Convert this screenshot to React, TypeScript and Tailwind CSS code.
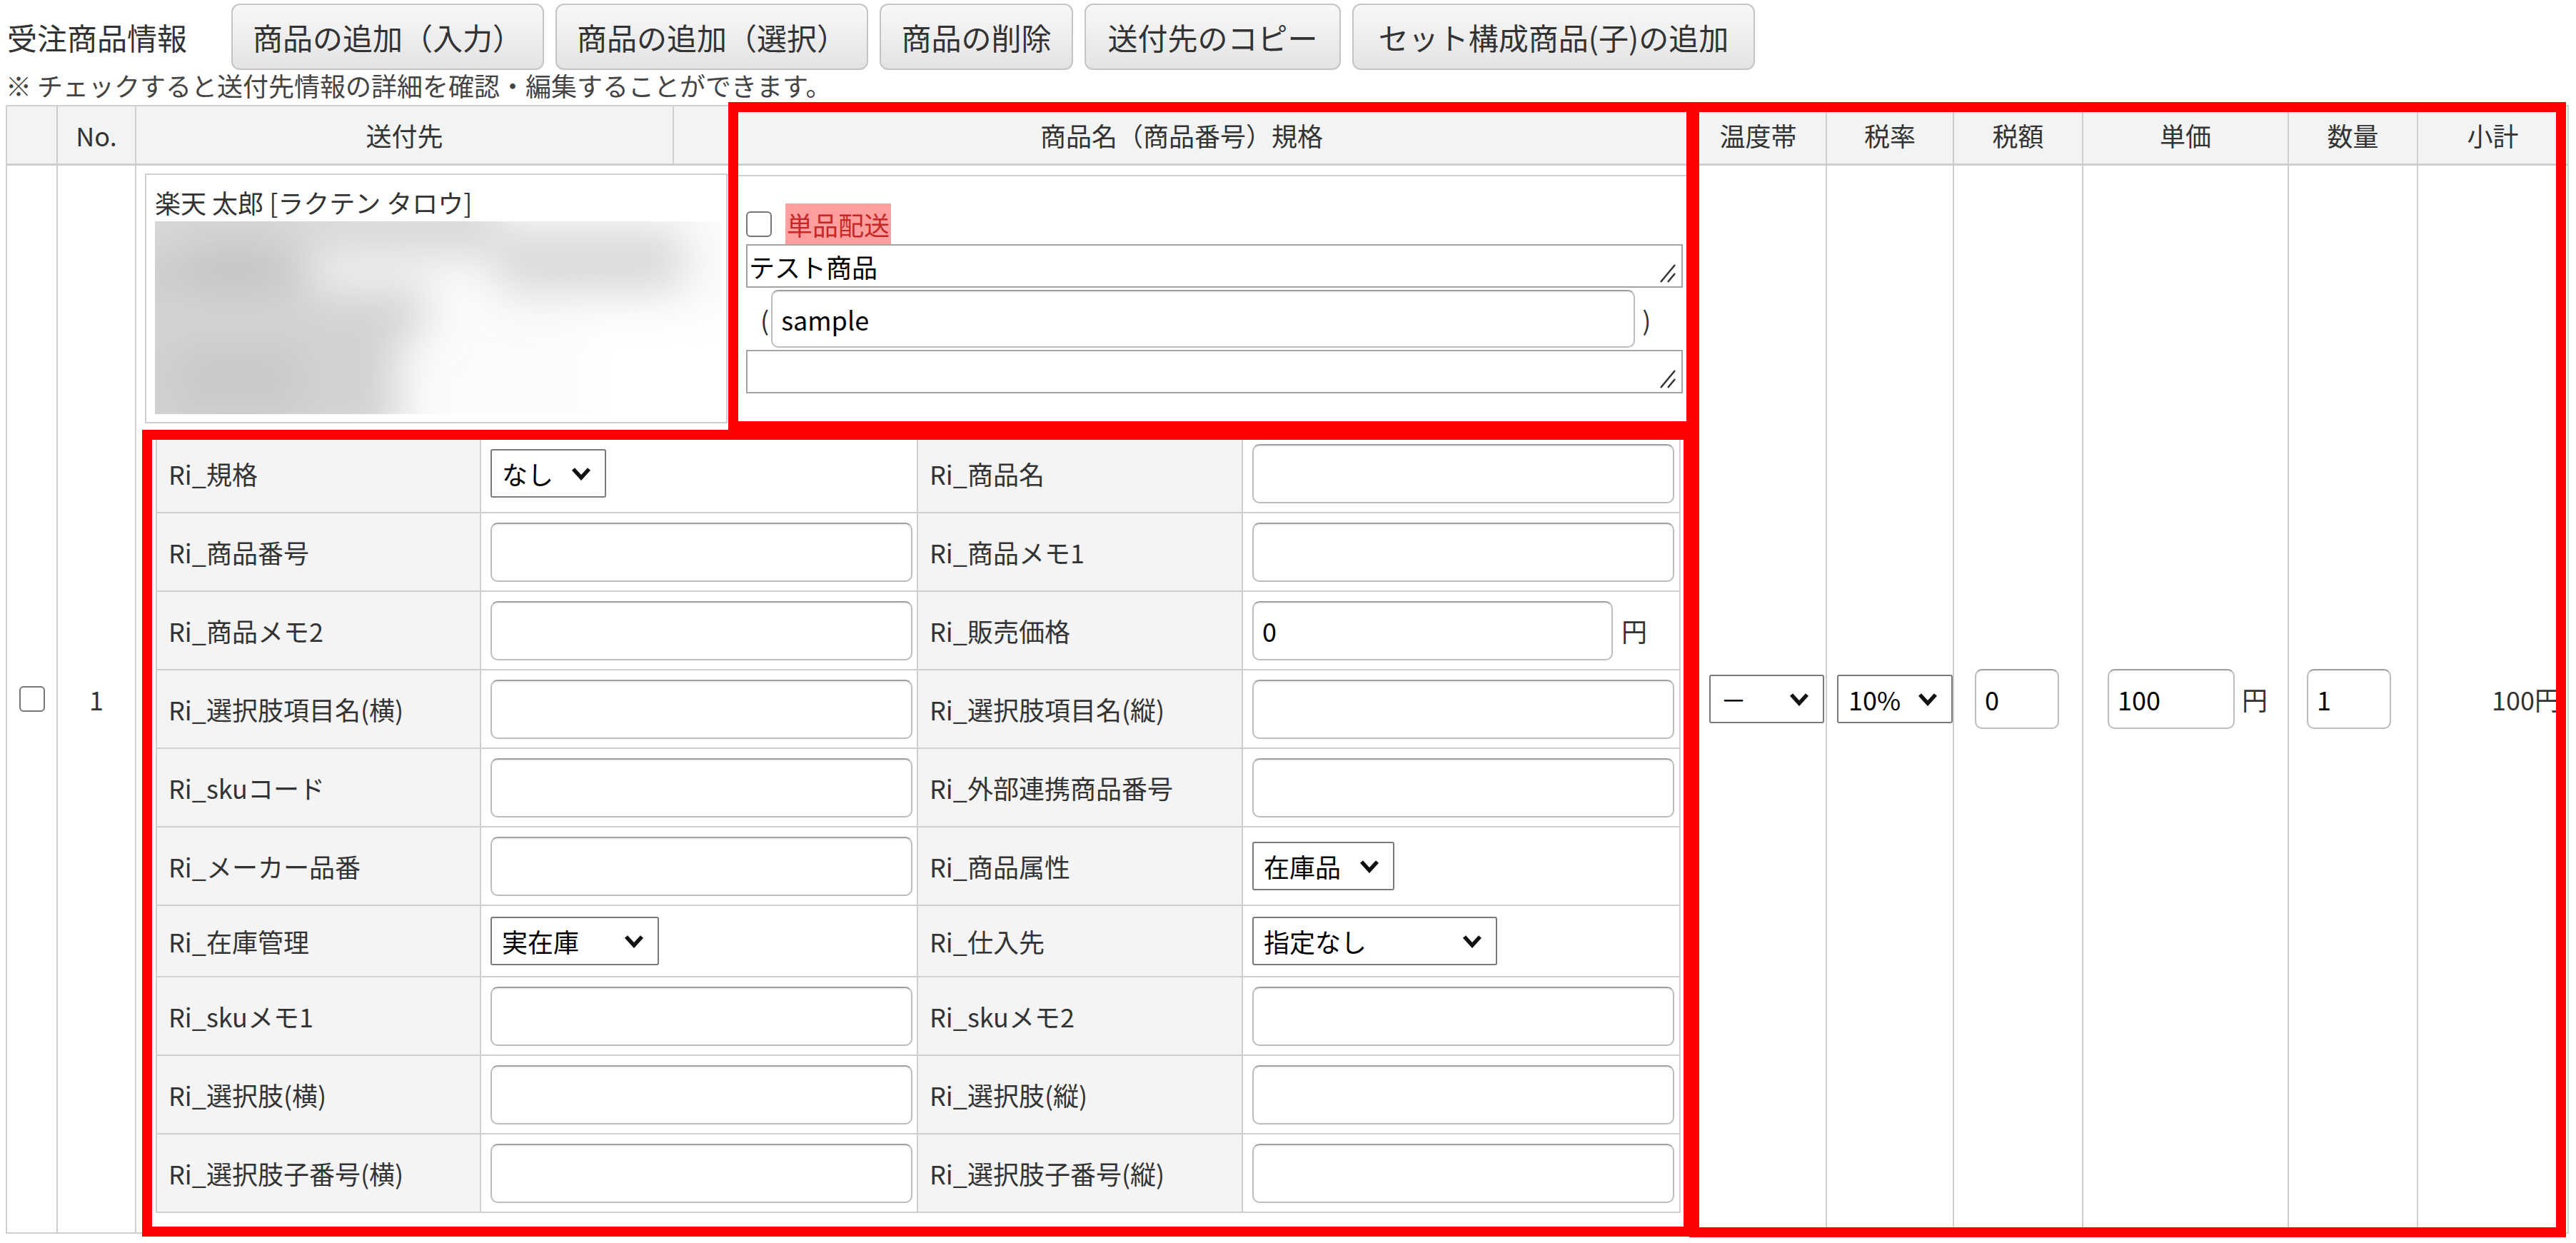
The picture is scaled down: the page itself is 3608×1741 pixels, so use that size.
import React from "react";

const line = "border-[#cfcfcf]";

const Chevron = () => (
  <svg width="30" height="20" viewBox="0 0 30 20" className="shrink-0">
    <path d="M4 4 L15 16 L26 4" fill="none" stroke="#111" strokeWidth="5.5" strokeLinecap="butt" strokeLinejoin="miter" />
  </svg>
);

const SelectBox = ({ value, className }: { value: string; className: string }) => (
  <div
    className={`h-[68px] flex items-center justify-between pl-[14px] pr-[18px] bg-white border-2 border-[#7a7a7a] rounded-[3px] text-black ${className}`}
  >
    <span className="leading-none">{value}</span>
    <Chevron />
  </div>
);

const TextBox = ({ value = "", className = "w-[591px] h-[83px]" }: { value?: string; className?: string }) => (
  <input
    readOnly
    value={value}
    className={`${className} px-[12px] bg-white border-2 border-[#bdbdbd] border-t-[#9e9e9e] rounded-[10px] text-black outline-none shadow-[inset_0_2px_2px_rgba(0,0,0,0.06)]`}
  />
);

const CheckBox = () => (
  <div className="w-[36px] h-[36px] shrink-0 bg-white border-2 border-[#767676] rounded-[6px]" />
);

const ResizeHandle = () => (
  <svg width="26" height="30" viewBox="0 0 26 30" className="absolute right-[6px] bottom-[4px]">
    <path d="M3 28 L23 4 M13 28 L23 16" stroke="#333" strokeWidth="2.5" fill="none" />
  </svg>
);

const TextArea = ({ value = "" }: { value?: string }) => (
  <div className="relative h-[61px] w-[1312px] flex items-center pl-[2px] bg-white border-2 border-[#a3a3a3] text-black">
    <span className="leading-none">{value}</span>
    <ResizeHandle />
  </div>
);

// the address lines are blurred out in the screenshot
const BlurredAddress = () => (
  <svg width="793" height="270" className="block">
    <defs>
      <filter id="addr-blur" x="-30%" y="-30%" width="160%" height="160%">
        <feGaussianBlur stdDeviation="30" />
      </filter>
    </defs>
    <rect width="793" height="270" fill="#fbfbfb" />
    <g filter="url(#addr-blur)">
      <rect x="-80" y="-60" width="300" height="420" fill="#c9c9c9" />
      <rect x="-80" y="-40" width="560" height="90" fill="#d8d8d8" />
      <rect x="480" y="10" width="260" height="90" fill="#d9d9d9" />
      <rect x="-80" y="90" width="460" height="70" fill="#d4d4d4" />
      <rect x="-80" y="150" width="420" height="160" fill="#d2d2d2" />
      <rect x="40" y="30" width="140" height="70" fill="#c4c4c4" />
      <rect x="30" y="180" width="170" height="80" fill="#c8c8c8" />
      <rect x="600" y="130" width="260" height="200" fill="#ffffff" />
    </g>
  </svg>
);

type Field = { label: string; ctrl: React.ReactNode };
type Row = { h: string; left: Field; right: Field };

const rows: Row[] = [
  {
    h: "h-[110px]",
    left: { label: "Ri_規格", ctrl: <SelectBox value="なし" className="w-[162px]" /> },
    right: { label: "Ri_商品名", ctrl: <TextBox /> },
  },
  {
    h: "h-[110px]",
    left: { label: "Ri_商品番号", ctrl: <TextBox /> },
    right: { label: "Ri_商品メモ1", ctrl: <TextBox /> },
  },
  {
    h: "h-[110px]",
    left: { label: "Ri_商品メモ2", ctrl: <TextBox /> },
    right: {
      label: "Ri_販売価格",
      ctrl: (
        <div className="flex items-center">
          <TextBox value="0" className="w-[505px] h-[83px]" />
          <span className="ml-[12px] text-[#333]">円</span>
        </div>
      ),
    },
  },
  {
    h: "h-[110px]",
    left: { label: "Ri_選択肢項目名(横)", ctrl: <TextBox /> },
    right: { label: "Ri_選択肢項目名(縦)", ctrl: <TextBox /> },
  },
  {
    h: "h-[110px]",
    left: { label: "Ri_skuコード", ctrl: <TextBox /> },
    right: { label: "Ri_外部連携商品番号", ctrl: <TextBox /> },
  },
  {
    h: "h-[110px]",
    left: { label: "Ri_メーカー品番", ctrl: <TextBox /> },
    right: { label: "Ri_商品属性", ctrl: <SelectBox value="在庫品" className="w-[199px]" /> },
  },
  {
    h: "h-[100px]",
    left: { label: "Ri_在庫管理", ctrl: <SelectBox value="実在庫" className="w-[236px]" /> },
    right: { label: "Ri_仕入先", ctrl: <SelectBox value="指定なし" className="w-[343px]" /> },
  },
  {
    h: "h-[110px]",
    left: { label: "Ri_skuメモ1", ctrl: <TextBox /> },
    right: { label: "Ri_skuメモ2", ctrl: <TextBox /> },
  },
  {
    h: "h-[110px]",
    left: { label: "Ri_選択肢(横)", ctrl: <TextBox /> },
    right: { label: "Ri_選択肢(縦)", ctrl: <TextBox /> },
  },
  {
    h: "h-[110px]",
    left: { label: "Ri_選択肢子番号(横)", ctrl: <TextBox /> },
    right: { label: "Ri_選択肢子番号(縦)", ctrl: <TextBox /> },
  },
];

const buttons = [
  { text: "商品の追加（入力）", w: "w-[438px]" },
  { text: "商品の追加（選択）", w: "w-[438px]" },
  { text: "商品の削除", w: "w-[271px]" },
  { text: "送付先のコピー", w: "w-[359px]" },
  { text: "セット構成商品(子)の追加", w: "w-[564px]" },
];

const headers = ["", "No.", "送付先", "商品名（商品番号）規格", "温度帯", "税率", "税額", "単価", "数量", "小計"];

const FormRow = ({ row }: { row: Row }) => (
  <div className={`grid grid-cols-[454px_612px_455px_613px] ${row.h}`}>
    <div className={`flex items-center pl-[16px] bg-[#f3f4f3] border-r-2 border-b-2 ${line} text-[#333]`}>
      {row.left.label}
    </div>
    <div className={`flex items-center pl-[13px] bg-white border-r-2 border-b-2 ${line}`}>{row.left.ctrl}</div>
    <div className={`flex items-center pl-[16px] bg-[#f3f4f3] border-r-2 border-b-2 ${line} text-[#333]`}>
      {row.right.label}
    </div>
    <div className={`flex items-center pl-[13px] bg-white border-r-2 border-b-2 ${line}`}>{row.right.ctrl}</div>
  </div>
);

export default function App() {
  return (
    <div className="relative w-[3608px] h-[1741px] overflow-hidden bg-white font-['Noto_Sans_CJK_JP','Noto_Sans',sans-serif] text-[36px] leading-none text-[#333]">
      {/* toolbar */}
      <div className="flex items-center pt-[5px] pl-[10px]">
        <span className="text-[42px] mr-[62px]">受注商品情報</span>
        <div className="flex gap-[16px]">
          {buttons.map((b) => (
            <button
              key={b.text}
              className={`${b.w} h-[93px] flex items-center justify-center rounded-[12px] border-2 border-[#c4c4c4] bg-gradient-to-b from-[#f8f8f8] to-[#e3e3e3] text-[42px] text-[#333]`}
            >
              {b.text}
            </button>
          ))}
        </div>
      </div>
      <div className="pl-[8px] pt-[3px] h-[36px] text-[#444]">※ チェックすると送付先情報の詳細を確認・編集することができます。</div>

      {/* order item table */}
      <div
        className={`mt-[13px] ml-[8px] w-[3590px] grid grid-cols-[71px_110px_753px_1424px_191px_178px_181px_288px_181px_211px] grid-rows-[83px_1496px] border-l-2 border-t-2 ${line}`}
      >
        {headers.map((h, i) => (
          <div
            key={i}
            className={`flex items-center justify-center bg-[#f2f4f3] border-r-2 border-b-[3px] ${line} text-[#333]`}
          >
            {h}
          </div>
        ))}

        {/* body row */}
        <div className={`flex items-center justify-center border-r-2 border-b-2 ${line}`}>
          <CheckBox />
        </div>
        <div className={`flex items-center justify-center border-r-2 border-b-2 ${line}`}>1</div>
        <div className={`col-span-2 border-r-2 border-b-2 ${line} pt-[11px] pl-[12px]`}>
          <div className="flex h-[350px]">
            <div className={`w-[816px] h-[350px] border-2 ${line} pl-[12px] pt-[20px]`}>
              <div className="h-[36px]">楽天 太郎 [ラクテン タロウ]</div>
              <div className="mt-[9px]">
                <BlurredAddress />
              </div>
            </div>
            <div className={`w-[1343px] mt-[2px] border-t-2 ${line} pl-[26px] pr-[5px] pt-[38px]`}>
              <div className="flex items-center h-[57px]">
                <CheckBox />
                <span className="ml-[19px] h-[57px] px-[2px] flex items-center bg-[#ff9e9e] text-[#c62828]">単品配送</span>
              </div>
              <TextArea value="テスト商品" />
              <div className="flex items-center mt-[3px] pl-[20px] text-[#333]">
                <span>(</span>
                <TextBox value="sample" className="ml-[3px] w-[1210px] h-[81px]" />
                <span className="ml-[10px]">)</span>
              </div>
              <div className="mt-[3px]">
                <TextArea />
              </div>
            </div>
          </div>
          <div className={`ml-[15px] mt-[14px] w-[2134px] border-l-2 border-t-2 ${line}`}>
            {rows.map((r) => (
              <FormRow key={r.left.label} row={r} />
            ))}
          </div>
        </div>
        <div className={`flex items-center pl-[26px] border-r-2 border-b-2 ${line}`}>
          <SelectBox value="－" className="w-[161px]" />
        </div>
        <div className={`flex items-center pl-[14px] border-r-2 border-b-2 ${line}`}>
          <SelectBox value="10%" className="w-[174px]" />
        </div>
        <div className={`flex items-center pl-[29px] border-r-2 border-b-2 ${line}`}>
          <TextBox value="0" className="w-[118px] h-[84px]" />
        </div>
        <div className={`flex items-center pl-[34px] border-r-2 border-b-2 ${line}`}>
          <TextBox value="100" className="w-[178px] h-[84px]" />
          <span className="ml-[10px]">円</span>
        </div>
        <div className={`flex items-center pl-[25px] border-r-2 border-b-2 ${line}`}>
          <TextBox value="1" className="w-[118px] h-[84px]" />
        </div>
        <div className={`flex items-center justify-end pr-[10px] border-r-2 border-b-2 ${line}`}>100円</div>
      </div>

      {/* annotation frames */}
      <div className="absolute left-[1020px] top-[143px] w-[1356px] h-[461px] border-[14px] border-[#ff0000]" />
      <div className="absolute left-[199px] top-[602px] w-[2173px] h-[1130px] border-[14px] border-[#ff0000]" />
      <div className="absolute left-[2366px] top-[143px] w-[1228px] h-[1590px] border-[14px] border-[#ff0000]" />
    </div>
  );
}
